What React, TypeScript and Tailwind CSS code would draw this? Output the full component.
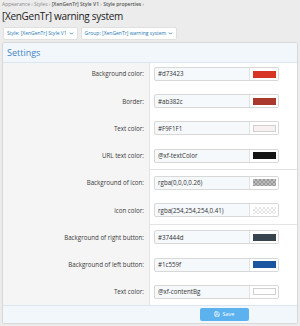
import { Save, ChevronDown } from 'lucide-react';

type Row = { label: string; value: string; swatch: string; checker?: boolean; border?: boolean; sepBefore?: boolean };

const ROWS: Row[] = [
  { label: 'Background color:', value: '#d73423', swatch: 'bg-[#d73423]' },
  { label: 'Border:', value: '#ab382c', swatch: 'bg-[#ab382c]' },
  { label: 'Text color:', value: '#F9F1F1', swatch: 'bg-[#f9f1f1]', border: true },
  { label: 'URL text color:', value: '@xf-textColor', swatch: 'bg-[#141414]' },
  { label: 'Background of icon:', value: 'rgba(0,0,0,0.26)', swatch: 'bg-[rgba(0,0,0,0.26)]', checker: true, sepBefore: true },
  { label: 'icon color:', value: 'rgba(254,254,254,0.41)', swatch: 'bg-[rgba(254,254,254,0.41)]', checker: true },
  { label: 'Background of right button:', value: '#37444d', swatch: 'bg-[#37444d]', sepBefore: true },
  { label: 'Background of left button:', value: '#1c559f', swatch: 'bg-[#1c559f]' },
  { label: 'Text color:', value: '@xf-contentBg', swatch: 'bg-white', border: true },
];

// first row sits close to the header, last one runs into the footer
const rowHeight = (i: number) =>
  i === 0 ? 'h-[24.6px] pb-[2.6px]' : i === ROWS.length - 1 ? 'h-[26.6px]' : 'h-[27.25px]';

function ColorRow({ row, i }: { row: Row; i: number }) {
  return (
    <div className="flex">
      <div className="w-[147px] shrink-0 bg-[#f5f5f5] border-r border-[#e3e3e3]">
        <div className={`flex items-center justify-end pr-[5px] text-[6.2px] text-[#3a3a3a] ${rowHeight(i)}`}>
          {row.label}
        </div>
      </div>
      <div className={`flex-1 ${row.sepBefore ? 'shadow-[inset_0_1px_0_#e4e4e4]' : ''}`}>
        <div className={`flex items-center pl-[4px] ${rowHeight(i)}`}>
          <div className="w-[125px] h-[14px] flex border border-[#d8d8d8] rounded-[2px] bg-[#f6f9fc] overflow-hidden">
            <div className="flex-1 flex items-center pl-[3px] text-[6.2px] text-[#333]">{row.value}</div>
            <div className="w-[29px] flex items-center justify-center border-l border-[#dfe3e8] bg-white">
              <div
                className={`w-[23px] h-[7px] ${row.border ? 'border border-[#d0d0d0]' : ''} ${
                  row.checker ? 'bg-[repeating-conic-gradient(#cfcfcf_0_25%,#ffffff_0_50%)] bg-size-[4px_4px]' : ''
                }`}
              >
                <div className={`w-full h-full ${row.swatch}`} />
              </div>
            </div>
          </div>
        </div>
      </div>
    </div>
  );
}

export default function App() {
  return (
    <div className="w-[300px] h-[326px] overflow-hidden bg-[#ececec] font-['Open_Sans',sans-serif]">
      <div className="px-[2px] pt-[1px] h-[8px] text-[5px] leading-[7px] text-[#8a8a8a] whitespace-nowrap">
        Appearance › Styles › <span className="font-semibold text-[#555]">[XenGenTr] Style V1</span> ›{' '}
        <span className="font-semibold text-[#555]">Style properties</span> ›
      </div>
      <div className="px-[2px] h-[19px] text-[10px] tracking-[-0.3px] leading-[16px] text-[#222]">
        [XenGenTr] warning system
      </div>
      <div className="flex gap-[3px] px-[3px] h-[13px]">
        <div className="flex items-center gap-[2px] px-[3px] bg-white border border-[#e0e0e0] rounded-[2px] text-[5px] text-[#2577b1]">
          Style: [XenGenTr] Style V1 <ChevronDown size={5} strokeWidth={4} />
        </div>
        <div className="flex items-center gap-[2px] px-[3px] bg-white border border-[#e0e0e0] rounded-[2px] text-[5px] text-[#2577b1]">
          Group: [XenGenTr] warning system <ChevronDown size={5} strokeWidth={4} />
        </div>
      </div>
      <div className="mx-[2px] mt-[2px] border border-[#d8d8d8] rounded-[2px] bg-white overflow-hidden">
        <div className="h-[20px] flex items-center px-[4px] bg-[#f2f7fc] border-b border-[#dce6f0] text-[9px] text-[#3f85c4]">
          Settings
        </div>
        <div className="flex flex-col">
          {ROWS.map((row, i) => (
            <ColorRow key={i} row={row} i={i} />
          ))}
        </div>
        <div className="h-[18px] flex bg-[#f2f7fc] border-t border-[#dce6f0]">
          <div className="w-[148px]" />
          <div className="flex-1 flex items-center justify-center">
            <div className="w-[49px] h-[13px] flex items-center justify-center gap-[3px] rounded-[2px] bg-[#5bb2ee] text-[5.5px] text-white">
              <Save size={6} strokeWidth={2.5} /> Save
            </div>
          </div>
        </div>
      </div>
    </div>
  );
}
